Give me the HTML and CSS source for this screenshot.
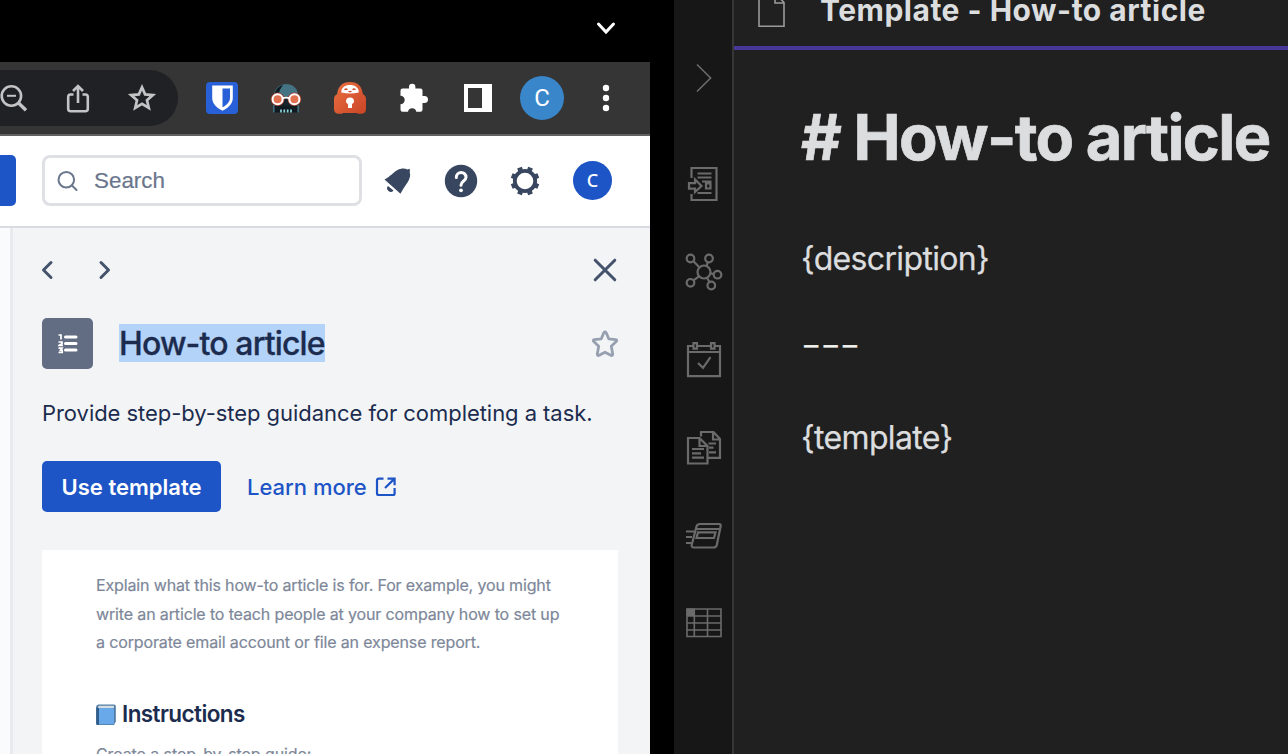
FILE: index.html
```html
<!DOCTYPE html>
<html lang="en">
<head>
<meta charset="utf-8">
<title>How-to article</title>
<link rel="stylesheet" href="styles.css">
</head>
<body>
<div class="screen">
  <section class="browser">
    <div class="tabstrip">
      <svg class="tab-chevron" width="24" height="20" viewBox="-12 -10 24 20"><path d="M-7.5-4 0 4 7.5-4" fill="none" stroke="#fff" stroke-width="3" stroke-linecap="round"/></svg>
    </div>
    <div class="toolbar">
      <div class="omnibox">
        <span class="cell"><svg width="36" height="36" viewBox="-18 -18 36 36" fill="none" stroke="#c4c4c6" stroke-width="2.6"><circle cx="-2.6" cy="-2" r="9.7"/><path d="M-7-2.2H2" stroke-width="2"/><path d="M4.5 5 12 12.2" stroke-width="3.4"/></svg></span>
        <span class="cell"><svg width="36" height="36" viewBox="-18 -18 36 36" fill="none" stroke="#c4c4c6" stroke-width="2.6"><path d="M-4.5-3.5H-7.5A2.4 2.4 0 0 0-9.8-1.1V10.8A2.5 2.5 0 0 0-7.3 13.3H7.3A2.5 2.5 0 0 0 9.8 10.8V-1.1A2.4 2.4 0 0 0 7.500-3.500H4.500M0 5V-11.500M-5-7 0-12 5-7"/></svg></span>
        <span class="cell"><svg width="36" height="36" viewBox="-18 -18 36 36" fill="none" stroke="#c4c4c6" stroke-width="2.7"><path d="M0-10.700 3.100-3.600 10.900-2.900 5 2.300 6.800 9.900 0 5.900-6.800 9.900-5 2.300-10.900-2.900-3.100-3.600Z"/></svg></span>
      </div>
      <div class="extensions">
        <span class="cell"><svg width="32" height="32" viewBox="0 0 32 32"><rect width="32" height="32" rx="4" fill="#2860d8"/><path d="M6.200 3.500H26.800V16C26.800 22.500 21 26.500 16.500 28.800C12 26.500 6.200 22.500 6.200 16Z" fill="#fff"/><path d="M16.500 6.500H24V16C24 20 20.500 23 16.500 25.300Z" fill="#2860d8"/></svg></span>
        <span class="cell"><svg width="36" height="36" viewBox="-18 -18 36 36"><path d="M-12.500 0C-12.500-9-7-14 .2-14S12.500-9 12.500 0Z" fill="#447383"/><path d="M-12 0C-12-7-8-12-3-13-6-9-7-7-7-3ZM-12.500 6H12.500V14.500H-12.500Z" fill="#111c22"/><path d="M-9-2H9L6 8H-6Z" fill="#16242b"/><path d="M-12.200 7V14.500M12.200 7V14.500" stroke="#447383" stroke-width="1.500"/><path d="M-5 11.500V14.500M-1.700 11.500V14.500M1.700 11.500V14.500M5 11.500V14.500" stroke="#8ed6dc" stroke-width="1.700"/><circle cx="-8.400" cy="1.300" r="6.800" fill="#a54632"/><circle cx="8.400" cy="1.300" r="6.800" fill="#a54632"/><g fill="#e07050" stroke="#fff" stroke-width="2"><circle cx="-8.400" cy="1.300" r="5"/><circle cx="8.400" cy="1.300" r="5"/></g><path d="M-3.500.5Q0-1.500 3.500.5" fill="none" stroke="#fff" stroke-width="2"/></svg></span>
        <span class="cell"><svg width="36" height="36" viewBox="-18 -18 36 36"><defs><linearGradient id="lock" x2="1" y2="1"><stop stop-color="#ea7040"/><stop offset="1" stop-color="#ca4527"/></linearGradient></defs><path d="M-12.800-4C-12-11.500-8-16 0-16S12-11.500 12.800-4Q16-2.500 16 1V11Q16 15.700 11 15.700H8L7 15H-7L-8 15.700H-11Q-16 15.700-16 11V1Q-16-2.500-12.800-4Z" fill="url(#lock)"/><path d="M-8.700-5.500C-9-10.500-5-13 0-13S9-10.500 8.700-5.500Q0-3.500-8.700-5.500Z" fill="#fff"/><path d="M-5.500-8.300Q-4-9.700-2.500-8.300M2.500-8.300Q4-9.700 5.500-8.300M-1.500-6.800Q0-5.800 1.500-6.800" fill="none" stroke="#cf4b2b" stroke-width="1.200"/><path d="M-4 3.500A4 4 0 1 1 4 3.500Q4 5 2 6V10H-2V6Q-4 5-4 3.500Z" fill="#fff"/></svg></span>
        <span class="cell"><svg width="32" height="32" viewBox="-16 -16 32 32"><path d="M-11.500-9.500H-5V-11A3.200 3.200 0 0 1 1.400-11V-9.500H6.500Q8.500-9.500 8.500-7.500V-2H10.500A3.400 3.400 0 0 1 10.500 5H8.500V11.500Q8.500 13.700 6.500 13.700H2.300A4.200 4.200 0 0 0-6 13.700H-11.500Q-13.500 13.700-13.500 11.500V6.200A4.200 4.200 0 0 0-13.500-2.200V-7.500Q-13.500-9.500-11.500-9.500Z" fill="#fff"/></svg></span>
        <span class="cell"><svg width="28" height="28" viewBox="0 0 28 28"><path fill="#fff" fill-rule="evenodd" d="M0 0H28V28H0ZM4 4V24H18V4Z"/></svg></span>
        <span class="cell"><span class="profile">C</span></span>
        <span class="cell"><svg width="8" height="28" viewBox="0 0 8 28" fill="#fff"><circle cx="4" cy="4" r="3.200"/><circle cx="4" cy="14" r="3.200"/><circle cx="4" cy="24" r="3.200"/></svg></span>
      </div>
    </div>
    <header class="site-header">
      <div class="create-btn"></div>
      <div class="search">
        <svg width="22" height="22" viewBox="0 0 22 22" fill="none" stroke="#6a768c" stroke-width="2" stroke-linecap="round"><circle cx="9.300" cy="9.700" r="7.800"/><path d="M15 15.500 19.500 20"/></svg>
        <span>Search</span>
      </div>
      <div class="header-icons">
        <span class="cell"><svg width="32" height="32" viewBox="-16 -16 32 32" fill="#38465f"><path d="M-12.500-1.500C-6-5-4-8.500.5-11C4-13 8-13 10.500-11.500L12.500-12.200L13-10.500L12.700-9C14-5.500 12.500-2 10.500 1.500C7.500 6 6 8 3.500 12.800Z"/><path d="M-9 5-3.500 9.500A3.500 3.500 0 0 1-9 5Z"/></svg></span>
        <span class="cell"><svg width="34" height="34" viewBox="-17 -17 34 34"><circle r="16.200" fill="#38465f"/><path d="M-4.700-3.500C-4.700-10 5-10 5-3.700C5 0 0 0 0 4.200" fill="none" stroke="#fff" stroke-width="3" stroke-linecap="round"/><circle cy="9.300" r="1.900" fill="#fff"/></svg></span>
        <span class="cell"><svg width="32" height="32" viewBox="-16 -16 32 32" fill="none" stroke="#38465f"><circle r="10.200" stroke-width="3.800"/><path d="M-5.500-13.300-4.400-10.500M5.500-13.300 4.400-10.500M-5.500 13.300-4.400 10.500M5.500 13.300 4.400 10.500M-13.300-5.500-10.500-4.400M-13.300 5.500-10.500 4.400M13.300-5.500 10.500-4.400M13.300 5.500 10.500 4.400" stroke-width="5"/></svg></span>
      </div>
      <div class="avatar">C</div>
    </header>
    <div class="content">
      <aside class="page-edge"></aside>
      <main class="panel">
        <nav class="panel-nav">
          <svg width="14" height="22" viewBox="-7 -11 14 22"><path d="M4-7.500-3.500 0 4 7.500" class="nav-stroke"/></svg>
          <svg width="14" height="22" viewBox="-7 -11 14 22"><path d="M-4-7.500 3.500 0-4 7.500" class="nav-stroke"/></svg>
          <svg class="close" width="26" height="26" viewBox="-13 -13 26 26"><path d="M-9.800-9.800 9.800 9.800M9.800-9.800-9.800 9.800" class="nav-stroke"/></svg>
        </nav>
        <div class="heading">
          <span class="tile"><svg width="20" height="20" viewBox="0 0 20 20" fill="none" stroke="#fff"><path d="M7.500 3H18M7.500 9.500H18M7.500 16H18" stroke-width="3" stroke-linecap="round"/><path d="M.5 1H3V5.500M.5 8H4V9.800L1 11.500H5M.5 14.200H4L2.500 16.300H4.200V18.500H.5" stroke-width="1.700"/></svg></span>
          <h1><span>How-to article</span></h1>
          <svg class="fav" width="30" height="30" viewBox="-15 -15 30 30"><path d="M-1.200-11.200Q0-12.800 1.200-11.200L3.700-5.200 10.600-4.400Q12.600-4 11.200-2.400L6.300 2.300 7.700 9.900Q7.700 12 5.800 11.300L0 8.200-5.800 11.300Q-7.700 12-7.700 9.900L-6.300 2.300-11.200-2.400Q-12.600-4-10.600-4.400L-3.700-5.200Z" fill="none" stroke="#97a0b0" stroke-width="2.800" stroke-linejoin="round"/></svg>
        </div>
        <p class="summary"><span>Provide step-by-step guidance for completing a task.</span></p>
        <div class="actions">
          <button class="use-btn"><span>Use template</span></button>
          <a class="learn"><span>Learn more</span><svg width="22" height="22" viewBox="0 0 22 22" fill="none" stroke="#1d54c6" stroke-width="2.200"><path d="M8.500 2.600H3.800Q2 2.600 2 4.400V17.200Q2 19 3.800 19H18Q19.600 19 19.600 17.200V12M12.500 2.600H19.600V9.300M19.300 2.900 10 12"/></svg></a>
        </div>
        <article class="preview">
          <p>Explain what this how-to article is for. For example, you might<br>write an article to teach people at your company how to set up<br>a corporate email account or file an expense report.</p>
          <h2><svg width="20" height="22" viewBox="0 0 20 22"><path d="M2.500.5H18Q19.800.5 19.800 2.500V17.500L18 21H2Q.2 21 .2 19V3Q.2.500 2.500.500Z" fill="#4f7ca5"/><path d="M2.500 1.800H18V4H2Z" fill="#d5dde3"/><path d="M3 4H16.500Q18 4 18 5.500V20.300H3Z" fill="#69a9ea"/><path d="M.2 3.500 3 4V21H1Q.2 21 .2 19Z" fill="#315d8a"/></svg><span>Instructions</span></h2>
          <p class="steps">Create a step-by-step guide:</p>
        </article>
      </main>
    </div>
  </section>
  <section class="notes">
    <nav class="ribbon">
      <svg width="40" height="40" viewBox="-20 -20 40 40"><path d="M-7-13.500 6.600 0-7 13.500" stroke-width="1.600"/></svg>
      <svg class="quick" width="40" height="40" viewBox="-20 -20 40 40"><path d="M-12.500-6V-16H12.500V16H-12.500V10M-6.500-10.500H7.500M-6.500-6.500H7.500M-2-2.500H7.500M-6.500 9H7.500M2-.5H6.500V4.500H2ZM-15-.8H-9V-4.500L-2.500 2-9 8V4.600H-15Z"/></svg>
      <svg width="40" height="40" viewBox="-20 -20 40 40"><circle r="6.500"/><circle cx="-13.500" cy="-13.500" r="3.800"/><circle cx="5" cy="-13.500" r="3.800"/><circle cx="13.500" cy="2.700" r="3.800"/><circle cx="7.300" cy="13.500" r="3.800"/><circle cx="-13.500" cy="10.800" r="3.800"/><path d="M-10.500-10.700-4.700-4.700M3.700-9.700 2.500-6M6.500 1.300 9.500 2M3 6 5.500 10M-10.500 8.300-5 4.300"/></svg>
      <svg width="40" height="40" viewBox="-20 -20 40 40"><path d="M-11.500-14H-16V16.200H16V-14H10.500M-6.500-14H6.500M-16-8H16M-10.500-16.800H-7V-11.300H-10.500ZM7-16.800H10.500V-11.300H7ZM-6 3-1 7.800 6.500-2.800"/></svg>
      <svg width="40" height="40" viewBox="-20 -20 40 40"><path d="M-16-10H-4.500L3.500-2V15.500H-16ZM-4.500-10V-2H3.500M-3-11.500V-16H9.500L16-9V9.800H4.500M9-16V-8.500H16M-12 1H0M-12 5.300H-3M-12 9.700H0M4.500-4.500H12M5-.3H9.500M5 4.300H12"/></svg>
      <svg width="40" height="40" viewBox="-20 -20 40 40"><path d="M-7.500-9.500Q-6.700-12 -4-12H15Q17.200-12 16.600-9.500L12.800 9Q12.200 11.500 9.500 11.500H-10Q-12.800 11.500-12.300 9ZM-8-7H16M-6-3.600H11.500L10 2H-7.500ZM-18-4.500H-10M-18 1H-12M-18 7H-13"/></svg>
      <svg class="table" width="40" height="40" viewBox="-20 -20 40 40"><path d="M-17-14H17V13.500H-17ZM-9.700-14V13.500M3.500-14V13.500M-17-7H17M-17 0H17M-17 7H17"/><path d="M-17.500-14.500H-9.500V-7H-17.500Z" fill="#6b6b6b" stroke="none"/></svg>
    </nav>
    <div class="editor">
      <div class="note-title">
        <svg width="28" height="36" viewBox="0 0 28 36" fill="none" stroke="#9a9a9a" stroke-width="1.600"><path d="M1 0V34.200H26V10.500L17 1V11H26"/></svg>
        <span>Template - How-to article</span>
      </div>
      <div class="note-body">
        <div class="md-h1"><span># How-to article</span></div>
        <div class="md-line desc"><span>{description}</span></div>
        <div class="md-line rule"><span>---</span></div>
        <div class="md-line tmpl"><span>{template}</span></div>
      </div>
    </div>
  </section>
</div>
</body>
</html>
```
FILE: styles.css
```css
* { box-sizing: border-box; }
body { margin: 0; background: #000; font-family: Inter, "Liberation Sans", sans-serif; }
svg { display: block; flex: none; }
h1, h2, p { margin: 0; }
.screen { display: flex; gap: 24px; width: 1288px; height: 754px; overflow: hidden; white-space: nowrap; }

.browser { width: 650px; height: 754px; flex: none; display: flex; flex-direction: column; overflow: hidden; }
.tabstrip { height: 62px; flex: none; display: flex; justify-content: flex-end; padding: 18px 32px 0 0; }
.toolbar { height: 74px; flex: none; display: flex; padding-top: 8px; background: #353535; border-bottom: 2px solid #616161; }
.cell { width: 64px; height: 56px; flex: none; display: flex; align-items: center; justify-content: center; }
.omnibox { width: 178px; height: 56px; display: flex; background: #202124; border-radius: 0 28px 28px 0; }
.omnibox .cell:first-child { margin-left: -18px; }
.extensions { display: flex; padding-left: 12px; }
.profile { width: 44px; height: 44px; border-radius: 50%; background: #3986ca; color: #fff; font: 24px/44px Roboto, sans-serif; text-align: center; }

.site-header { height: 92px; flex: none; display: flex; align-items: flex-start; padding-top: 19px; background: #fff; border-bottom: 2px solid #d9dbe3; }
.create-btn { width: 16px; height: 51px; background: #1d54c6; border-radius: 0 5px 5px 0; }
.search { width: 320px; height: 51px; margin-left: 26px; padding-left: 12px; display: flex; align-items: center; gap: 15px; border: 3px solid #dfe0e4; border-radius: 8px; color: #6a768c; font: 22.4px/47px "Liberation Sans", Arial, sans-serif; }
.search span { height: 47px; -webkit-text-stroke: 0.2px #6a768c; }
.header-icons { display: flex; padding-left: 3px; margin-top: -2px; }
.avatar { width: 39px; height: 39px; margin: 6px 0 0 16px; border-radius: 50%; background: #1d54c6; color: #fff; font: 500 18px/39px "Noto Sans", sans-serif; text-align: center; }

.content { flex: 1; display: flex; min-height: 0; background: #f3f4f6; }
.page-edge { width: 13px; flex: none; background: #fafbfc; border-right: 3px solid #e9eaed; }
.panel { flex: 1; padding: 0 32px 0 29px; }
.panel-nav { height: 84px; display: flex; align-items: center; gap: 44px; }
.nav-stroke { fill: none; stroke: #44526c; stroke-width: 3px; stroke-linecap: round; stroke-linejoin: round; }
.panel-nav svg:first-child { margin-left: -2px; }
.panel-nav .close { margin-left: auto; }
.heading { height: 51px; margin-top: 6px; display: flex; align-items: center; }
.tile { width: 51px; height: 51px; border-radius: 5px; background: #626d84; display: flex; align-items: center; justify-content: center; }
h1 { margin: -2px 0 0 26px; height: 38px; background: #b4d3f8; color: #1c2c4e; font-size: 32px; line-height: 40px; font-weight: 500; letter-spacing: -0.86px; -webkit-text-stroke: 0.3px #1c2c4e; }
.fav { margin: 0 -2px 0 auto; }
.summary { margin-top: 30px; color: #1c2c4e; font-size: 22px; line-height: 28px; letter-spacing: -0.05px; }
.actions { display: flex; margin-top: 34px; height: 51px; }
.use-btn { width: 179px; border: 0; border-radius: 5px; background: #1d54c6; color: #fff; font: 600 22px/51px Inter, sans-serif; padding: 1px 0 0; }
.learn { margin-left: 26px; display: flex; align-items: center; gap: 8px; color: #1d54c6; font-size: 22px; font-weight: 500; line-height: 51px; }
.learn span { padding-top: 2px; }
.preview { margin-top: 38px; height: 240px; width: 576px; padding: 21px 0 0 54px; background: #fff; color: #7d8799; font-size: 16px; line-height: 28.5px; letter-spacing: -0.14px; -webkit-text-stroke: 0.2px #7d8799; }
h2 { display: flex; align-items: center; gap: 6px; margin-top: 43px; color: #1c2c4e; font-size: 22.5px; line-height: 28px; font-weight: 600; letter-spacing: -0.58px; -webkit-text-stroke: 0; }
h2 svg { margin-top: 3px; }
.steps { margin-top: 12px; letter-spacing: -0.08px; }

.notes { flex: 1; display: flex; min-width: 0; background: #202020; }
.ribbon { width: 60px; flex: none; display: flex; flex-direction: column; align-items: center; gap: 48px; padding-top: 58px; background: #171717; border-right: 2px solid #363636; }
.ribbon svg { fill: none; stroke: #6b6b6b; stroke-width: 2.2px; margin-left: 2px; }
.ribbon .quick { margin-top: 18px; }
.ribbon .table { margin-top: -1px; stroke-width: 1.6px; }
.editor { flex: 1; min-width: 0; color: #dcddde; }
.note-title { height: 50px; border-bottom: 4px solid #483699; display: flex; padding-left: 24px; font-size: 30px; font-weight: 700; line-height: 36px; }
.note-title svg { margin-top: -8px; }
.note-title span { margin: -8px 0 0 34px; letter-spacing: 0.5px; }
.note-body { padding: 44px 0 0 67px; }
.md-h1 { font-size: 63px; line-height: 86px; height: 88px; font-weight: 700; letter-spacing: -1.65px; -webkit-text-stroke: 0.7px #dcddde; }
.md-line { font-size: 32px; line-height: 48px; letter-spacing: -0.65px; -webkit-text-stroke: 0.25px #dcddde; }
.desc { margin-top: 53px; }
.rule { margin-top: 38px; }
.rule span { display: inline-block; transform: scaleX(1.38); transform-origin: left; color: #f2f2ee; }
.tmpl { margin-top: 45px; }
```
